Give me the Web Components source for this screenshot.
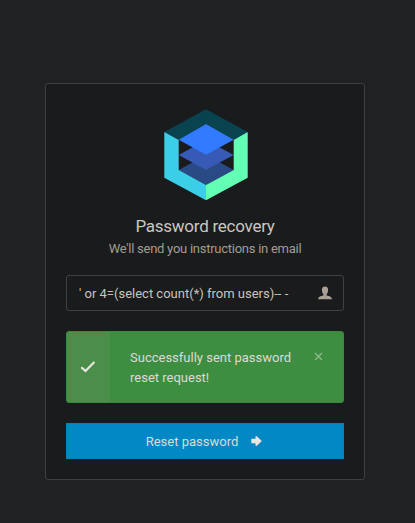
<!DOCTYPE html>
<html lang="en">
<head>
<meta charset="utf-8">
<title>Password recovery</title>
<style>
body{margin:0;background:#1f2123;font:13px/20px Roboto,sans-serif;color:#d6d3ce}
</style>
</head>
<body>
<recovery-page></recovery-page>
<script>
const define=(name,html)=>customElements.define(name,class extends HTMLElement{
  constructor(){super();this.attachShadow({mode:'open'}).innerHTML=html;}
});
define('brand-logo',`<style>:host{display:block;height:92px;padding-left:2px}svg{display:block;margin:0 auto}</style>
<svg width="84" height="92" viewBox="164 109 84 92">
<path d="M164.3 132 206 109.3 247.7 132 233.7 140 206 124 178.7 140Z" fill="#09434f"/>
<path d="M178.7 170 206 155 233.7 170 206 185Z" fill="#2a4a86"/>
<path d="M178.7 155 206 140 233.7 155 206 170Z" fill="#365ab6"/>
<path d="M178.7 139.7 206 124 233.7 139.7 206 154.8Z" fill="#327aff"/>
<path d="M164.3 132 178.7 140V170L206 185V200.2L164.3 177.7Z" fill="#3acfe6"/>
<path d="M247.7 132 233.7 140V170L206 185V200.2L247.7 177.7Z" fill="#63ffb5"/>
</svg>`);
define('card-heading',`<style>:host{display:block;text-align:center;margin-top:14px}
h1{margin:0;font-weight:400;font-size:17px;letter-spacing:-.25px;line-height:23px;color:#cbc7c0}
p{margin:1px 0 0;letter-spacing:-.26px;color:#a39c91}</style>
<h1><slot name="title"></slot></h1><p><slot></slot></p>`);
define('text-field',`<style>:host{display:flex;align-items:center;justify-content:space-between;box-sizing:border-box;height:36px;margin-top:16px;padding:0 11px 0 12px;border:1px solid #3f4142;border-radius:3px;background:#191b1d;color:#c8c4bd;white-space:pre}
svg{display:block}span{padding-top:1px}</style>
<span><slot></slot></span>
<svg width="14" height="14" viewBox="0 0 14 14" fill="#a9a196"><path d="M7 .5C9.2.5 10.1 1.8 10.1 4 10.1 5.8 9.4 7.4 8.6 8.2V9.4C12 9.9 14 11 14 13.3H0C0 11 2 9.9 5.4 9.4V8.2C4.6 7.4 3.9 5.8 3.9 4 3.9 1.8 4.8.5 7 .5Z"/></svg>`);
define('success-alert',`<style>:host{display:flex;box-sizing:border-box;height:72px;margin-top:20px;border:1px solid #388a3b;border-radius:3px;background:#3e8e41;color:#dbdad6;overflow:hidden}
.mark{display:flex;width:43px;align-items:center;justify-content:center;background:#4b8e4a}
.mark svg{margin-right:1px}
.text{flex:1;padding:16px 0 0 20px}
.close{padding:20px 20px 0 0}svg{display:block}</style>
<div class="mark"><svg width="16" height="14" viewBox="0 0 16 14"><path d="M1.3 7.2 5.5 11 14.4 2" fill="none" stroke="#e9e7e3" stroke-width="2.2"/></svg></div>
<div class="text"><slot></slot></div>
<div class="close"><svg width="9" height="9" viewBox="0 0 9 9"><path d="m1 1 7 7M8 1 1 8" stroke="#95bc93" stroke-width="1.1"/></svg></div>`);
define('primary-button',`<style>:host{display:block;margin-top:20px}
button{display:flex;align-items:center;justify-content:center;gap:13px;box-sizing:border-box;width:100%;height:36px;margin:0;padding:0 2px 0 0;border:1px solid #0583be;background:#0288c5;color:#dbdad6;font:inherit}
svg{display:block}span{padding-top:1px}</style>
<button><span><slot></slot></span><svg width="11" height="10" viewBox="0 0 11 10"><path d="M.3 2.8H4.5V.3H5.9L10.8 5 5.9 9.7H4.5V7.2H.3Z" fill="#e8e6e3"/></svg></button>`);
define('login-card',`<style>:host{display:block;box-sizing:border-box;width:320px;height:397px;padding:25px 20px 20px;border:1px solid #3d3f41;border-radius:3px;background:#191b1d}</style><slot></slot>`);
define('recovery-page',`<style>:host{display:flex;box-sizing:border-box;height:523px;padding:83px 0 0 45px;align-items:flex-start;background:#1f2123}</style>
<login-card><brand-logo></brand-logo>
<card-heading><span slot="title">Password recovery</span>We'll send you instructions in email</card-heading>
<text-field>' or 4=(select count(*) from users)-- -</text-field>
<success-alert>Successfully sent password<br>reset request!</success-alert>
<primary-button>Reset password</primary-button></login-card>`);
</script>
</body>
</html>
